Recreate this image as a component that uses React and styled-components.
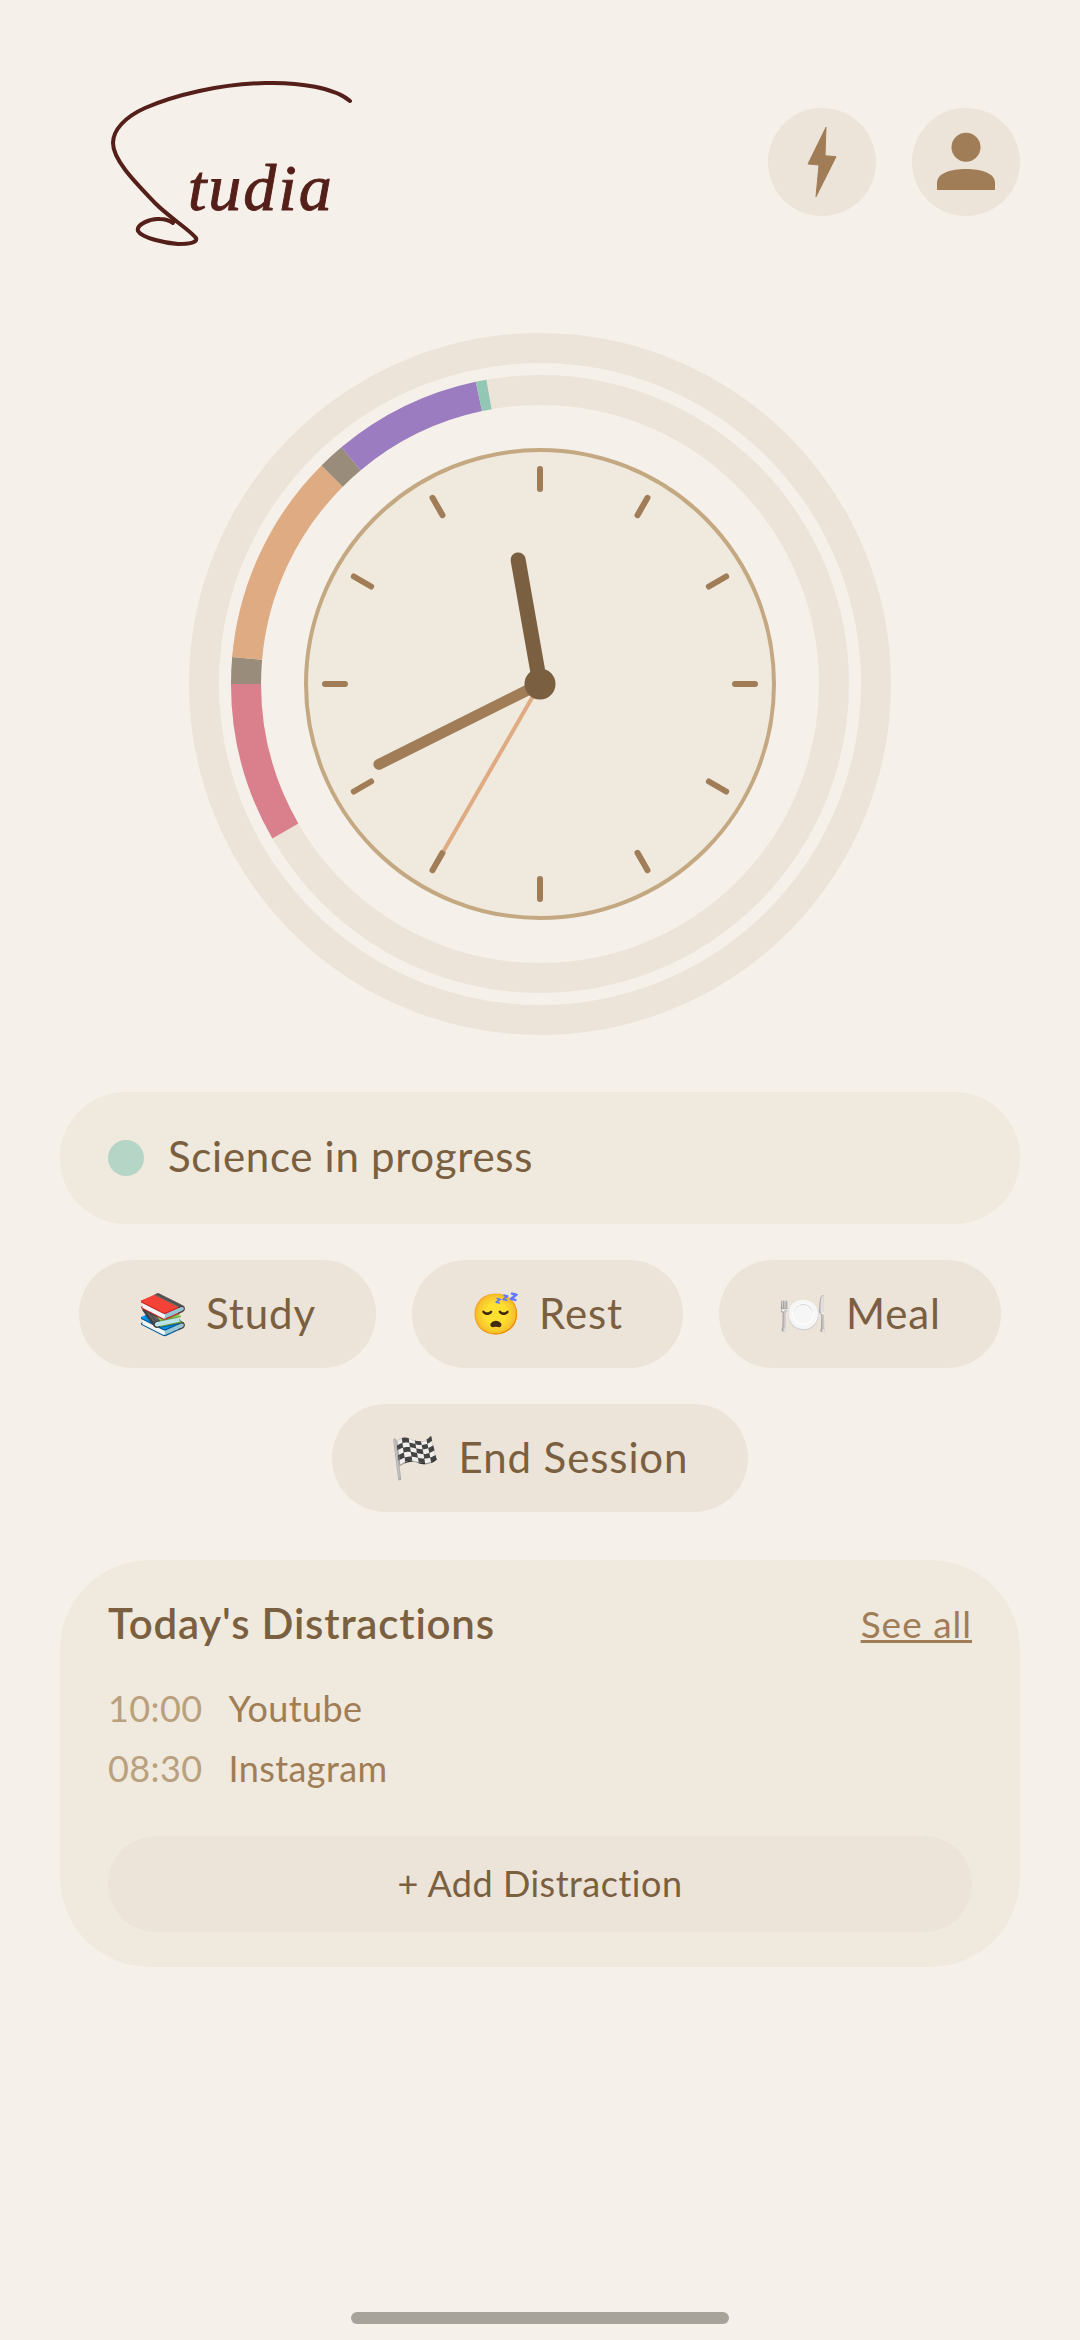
import React from "react";
import styled, { createGlobalStyle } from "styled-components";

const CX = 352;
const CY = 352;

const polar = (r, deg) => {
  const a = ((deg - 90) * Math.PI) / 180;
  return [CX + r * Math.cos(a), CY + r * Math.sin(a)];
};

const arcPath = (r, from, to) => {
  const [x1, y1] = polar(r, from);
  const [x2, y2] = polar(r, to);
  return `M${x1} ${y1} A${r} ${r} 0 ${to - from > 180 ? 1 : 0} 1 ${x2} ${y2}`;
};

const segments = [
  { from: 240, to: 270, color: "#da7f8c" },
  { from: 270, to: 275, color: "#998c7a" },
  { from: 275, to: 315, color: "#dfab82" },
  { from: 315, to: 320, color: "#998c7a" },
  { from: 320, to: 348, color: "#9b7cc1" },
  { from: 348, to: 350, color: "#92c7b5" },
];

const ticks = Array.from({ length: 12 }, (_, i) => i * 30);

const hands = [
  { angle: 210, length: 191, width: 4, color: "#dfab82" },
  { angle: 243.5, length: 180, width: 11, color: "#a07d56" },
  { angle: 350, length: 126, width: 15, color: "#7a5f40" },
];

const actions = [
  { emoji: "📚", label: "Study" },
  { emoji: "😴", label: "Rest" },
  { emoji: "🍽️", label: "Meal" },
];

const distractions = [
  { time: "10:00", name: "Youtube" },
  { time: "08:30", name: "Instagram" },
];

const App = () => {
  return (
    <>
      <GlobalStyle />
      <Page>
        <Header>
          <Logo viewBox="0 0 300 220" role="img" aria-label="Studia">
            <path
              d="M270 41 C255 28 220 22 185 23 C140 24 95 35 65 48 C45 57 33 70 33 83 C33 100 55 122 75 143 C90 158 110 170 116 178 C118 183 108 184 98 184 C85 183 62 178 58 171 C56 165 70 158 80 159 C85 159 90 161 93 163"
              fill="none"
              stroke="#551f19"
              strokeWidth="4"
              strokeLinecap="round"
            />
            <LogoText x="108" y="150">
              tudia
            </LogoText>
          </Logo>
          <HeaderButtons>
            <CircleButton>
              <svg width="30" height="72" viewBox="0 0 30 72">
                <path d="M19 1.3 L18 29.7 L29 30.7 L9 70.7 L12 39 L1 38 Z" fill="#a07d56" stroke="#a07d56" strokeWidth="1" strokeLinejoin="round" />
              </svg>
            </CircleButton>
            <CircleButton>
              <svg width="60" height="60" viewBox="0 0 60 60">
                <circle cx="30" cy="15.3" r="14.5" fill="#a07d56" />
                <path d="M1 58 V51 C1 41 15 37 30 37 C45 37 59 41 59 51 V58 Z" fill="#a07d56" />
              </svg>
            </CircleButton>
          </HeaderButtons>
        </Header>

        <ClockWrap>
          <svg width="704" height="704" viewBox="0 0 704 704">
            <circle cx={CX} cy={CY} r="336" fill="none" stroke="#ece4d8" strokeWidth="30" />
            <circle cx={CX} cy={CY} r="294" fill="none" stroke="#ece4d8" strokeWidth="30" />
            {segments.map((s) => (
              <path key={s.from} d={arcPath(294, s.from, s.to)} fill="none" stroke={s.color} strokeWidth="30" />
            ))}
            <circle cx={CX} cy={CY} r="234" fill="#f0e9dd" stroke="#c4a882" strokeWidth="4" />
            {ticks.map((deg) => {
              const [x1, y1] = polar(195, deg);
              const [x2, y2] = polar(215, deg);
              return <line key={deg} x1={x1} y1={y1} x2={x2} y2={y2} stroke="#a07d56" strokeWidth="6" strokeLinecap="round" />;
            })}
            {hands.map((h) => {
              const [x, y] = polar(h.length, h.angle);
              return <line key={h.angle} x1={CX} y1={CY} x2={x} y2={y} stroke={h.color} strokeWidth={h.width} strokeLinecap="round" />;
            })}
            <circle cx={CX} cy={CY} r="15.5" fill="#7a5f40" />
          </svg>
        </ClockWrap>

        <StatusPill>
          <StatusDot />
          <StatusText>Science in progress</StatusText>
        </StatusPill>

        <ActionRow>
          {actions.map((a) => (
            <ActionButton key={a.label}>
              <Emoji>{a.emoji}</Emoji>
              <ActionLabel>{a.label}</ActionLabel>
            </ActionButton>
          ))}
        </ActionRow>
        <ActionRow>
          <ActionButton>
            <Emoji>🏁</Emoji>
            <ActionLabel>End Session</ActionLabel>
          </ActionButton>
        </ActionRow>

        <Card>
          <CardHeader>
            <CardTitle>Today's Distractions</CardTitle>
            <SeeAll href="#">See all</SeeAll>
          </CardHeader>
          <DistractionList>
            {distractions.map((d) => (
              <DistractionRow key={d.time}>
                <DistractionTime>{d.time}</DistractionTime>
                <DistractionName>{d.name}</DistractionName>
              </DistractionRow>
            ))}
          </DistractionList>
          <AddButton>+ Add Distraction</AddButton>
        </Card>

        <HomeIndicator />
      </Page>
    </>
  );
};

const GlobalStyle = createGlobalStyle`
  html, body {
    margin: 0;
    padding: 0;
    background: #f5f0e9;
  }
  * {
    box-sizing: border-box;
  }
`;

const Page = styled.div`
  position: relative;
  width: 1080px;
  height: 2340px;
  padding: 60px 60px 0;
  background: #f5f0e9;
  font-family: Lato, "Noto Sans", sans-serif;
  color: #7a5f40;
  overflow: hidden;
`;

const Header = styled.header`
  display: flex;
  justify-content: space-between;
  align-items: flex-start;
  padding-left: 20px;
  height: 220px;
`;

const Logo = styled.svg`
  width: 300px;
  height: 220px;
`;

const LogoText = styled.text`
  font-family: "Liberation Serif", serif;
  font-style: italic;
  font-size: 66px;
  letter-spacing: 2px;
  fill: #551f19;
  stroke: #551f19;
  stroke-width: 1px;
`;

const HeaderButtons = styled.div`
  display: flex;
  gap: 36px;
  margin-top: 48px;
`;

const CircleButton = styled.div`
  width: 108px;
  height: 108px;
  border-radius: 50%;
  background: #ece4d8;
  display: flex;
  align-items: center;
  justify-content: center;
`;

const ClockWrap = styled.div`
  display: flex;
  justify-content: center;
  margin-top: 52px;
`;

const StatusPill = styled.div`
  display: flex;
  align-items: center;
  gap: 24px;
  height: 132px;
  margin-top: 56px;
  padding: 0 48px;
  border-radius: 66px;
  background: #f0e9dd;
`;

const StatusDot = styled.span`
  width: 36px;
  height: 36px;
  border-radius: 50%;
  background: #b5d6c6;
`;

const StatusText = styled.span`
  font-size: 42px;
  letter-spacing: 0.7px;
  padding-bottom: 4px;
`;

const ActionRow = styled.div`
  display: flex;
  justify-content: center;
  gap: 36px;
  margin-top: 36px;
`;

const ActionButton = styled.div`
  display: flex;
  align-items: center;
  gap: 19px;
  height: 108px;
  padding: 0 60px;
  border-radius: 54px;
  background: #ece4d8;
  font-size: 42px;
  letter-spacing: 0.9px;
  white-space: nowrap;
`;

const ActionLabel = styled.span`
  padding-bottom: 3px;
`;

const Emoji = styled.span`
  display: flex;
  justify-content: center;
  width: 48px;
  font-size: 40px;
  letter-spacing: 0;
  font-family: "Noto Color Emoji", sans-serif;
`;

const Card = styled.section`
  margin-top: 48px;
  padding: 38px 48px 35px;
  border-radius: 90px;
  background: #f0e9dd;
`;

const CardHeader = styled.div`
  display: flex;
  justify-content: space-between;
  align-items: center;
  height: 50px;
`;

const CardTitle = styled.h2`
  margin: 0;
  font-size: 42px;
  font-weight: 600;
  letter-spacing: 0.8px;
`;

const SeeAll = styled.a`
  font-size: 37px;
  letter-spacing: 1px;
  color: #a07d56;
  text-decoration: underline;
`;

const DistractionList = styled.div`
  margin-top: 30px;
`;

const DistractionRow = styled.div`
  display: flex;
  gap: 26px;
  height: 60px;
  align-items: center;
  font-size: 36px;
  letter-spacing: 0.4px;
`;

const DistractionTime = styled.span`
  color: #b9a07e;
`;

const DistractionName = styled.span`
  color: #a07d56;
`;

const AddButton = styled.div`
  display: flex;
  align-items: center;
  justify-content: center;
  height: 96px;
  margin-top: 38px;
  padding-bottom: 3px;
  border-radius: 48px;
  background: #ece4d8;
  font-size: 36px;
  letter-spacing: 0.5px;
`;

const HomeIndicator = styled.div`
  position: absolute;
  left: 351px;
  top: 2312px;
  width: 378px;
  height: 12px;
  border-radius: 6px;
  background: #a7a39a;
`;

export default App;
